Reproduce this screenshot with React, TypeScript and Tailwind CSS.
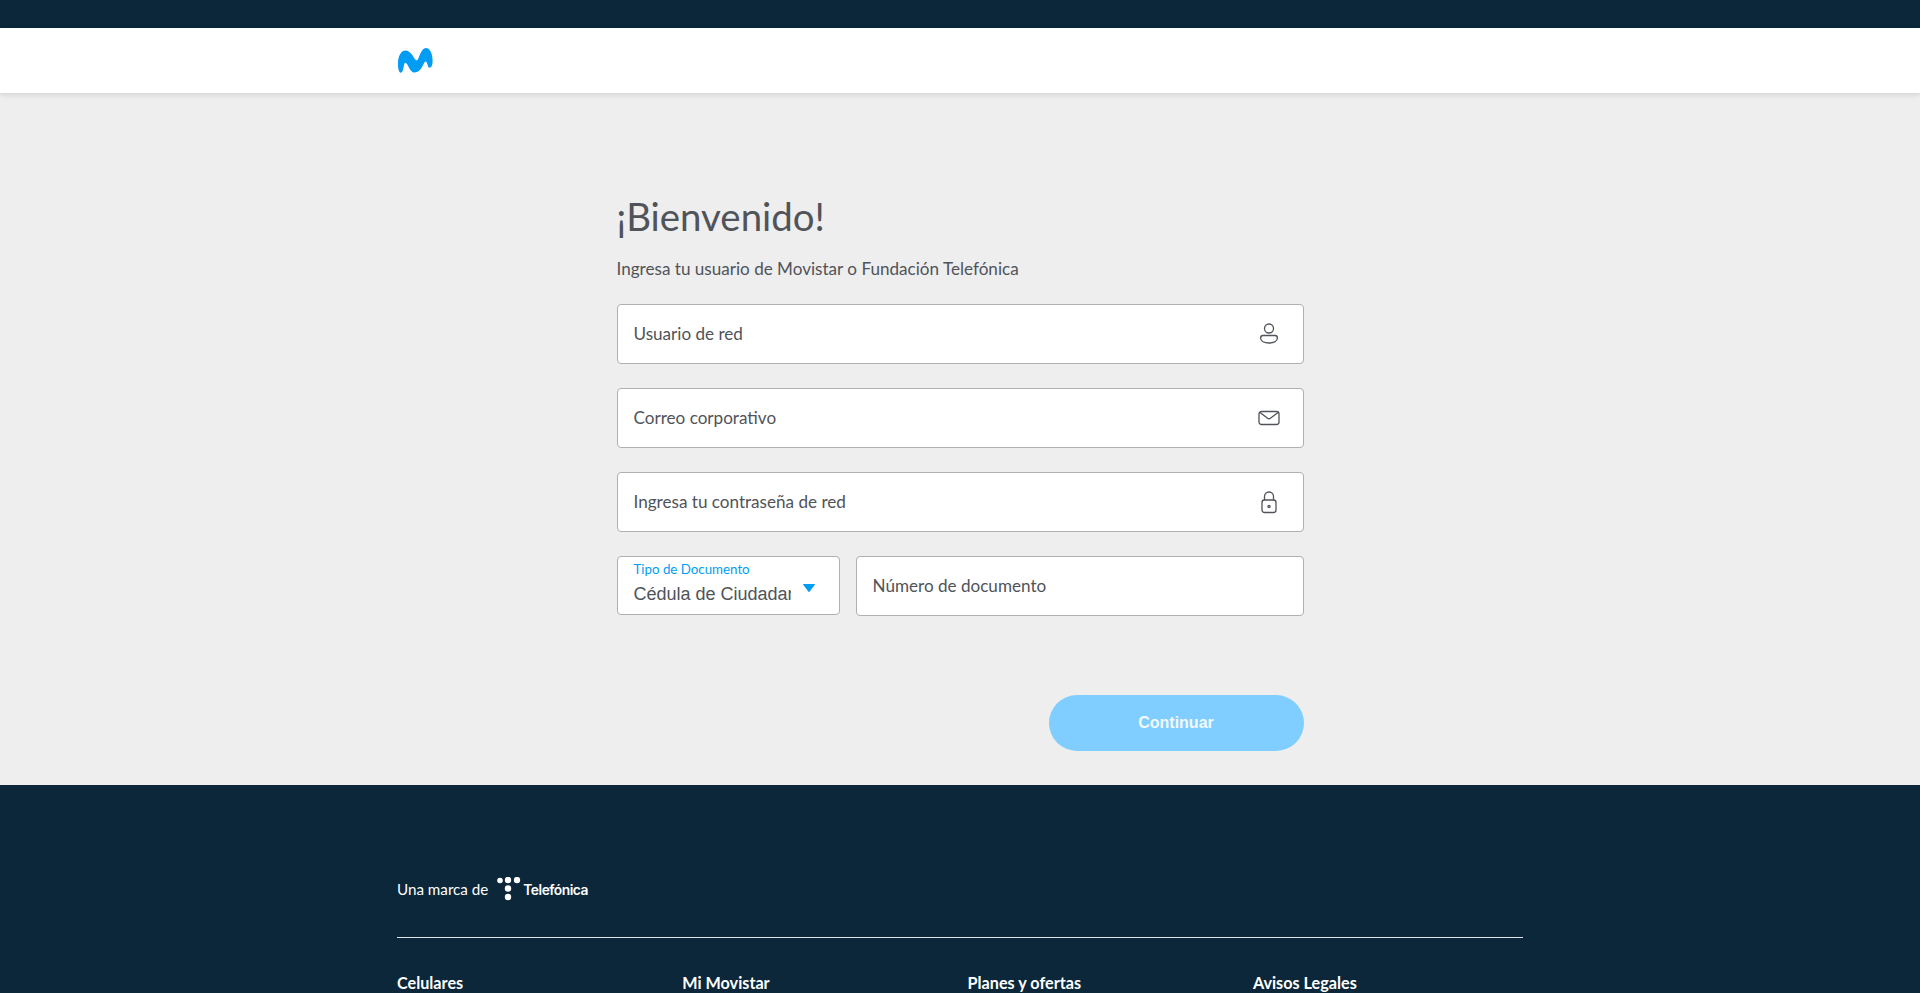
const font = "font-['Lato','Noto_Sans',sans-serif]";

function UserIcon() {
  return (
    <svg width="20" height="24" viewBox="0 0 20 24" fill="none" stroke="#50535a" strokeWidth="1.3">
      <circle cx="10" cy="6.500" r="4.500" />
      <path d="M4 13.500h12c1.600 0 2.400 1 2.400 2.600 0 3-3.600 4.900-8.400 4.900s-8.400-1.900-8.400-4.900c0-1.600.8-2.600 2.400-2.600z" />
    </svg>
  );
}

function MailIcon() {
  return (
    <svg width="22" height="16" viewBox="0 0 22 16" fill="none" stroke="#50535a" strokeWidth="1.3" strokeLinejoin="round">
      <rect x="1" y="1.500" width="20" height="13" rx="2.500" />
      <path d="M2 2.500l7.600 5.800c.9.600 1.900.600 2.800 0L20 2.500" />
    </svg>
  );
}

function LockIcon() {
  return (
    <svg width="18" height="24" viewBox="0 0 18 24" fill="none" stroke="#50535a" strokeWidth="1.3">
      <path d="M4.500 10V6.500a4.500 4.500 0 0 1 9 0V10" />
      <rect x="2" y="10" width="14" height="12.500" rx="2.500" />
      <circle cx="9" cy="16.500" r="1.100" />
    </svg>
  );
}

function MovistarLogo() {
  return (
    <svg width="36" height="26" viewBox="0 0 36 26" fill="#019df4">
      <path d="M3.700 25.700C1.800 25.700.6 20 1 15 1.500 8 4.500 3.500 8.500 3.500c4 0 6.500 4 8.700 7.500 1.300 2.200 2.300 2.700 3.300 2C22.500 10.500 24 1 29 1c4 0 6.600 6 6.600 13 0 4-1.100 6.700-3.100 6.700-2 0-2-6.200-4-6.200s-3.500 11-11 11c-5 0-6.500-9.800-9.200-9.800-2 0-1.300 10-4.600 10z" />
    </svg>
  );
}

function TelefonicaDots() {
  return (
    <svg width="24" height="24" viewBox="0 0 24 24" fill="#fff">
      <circle cx="3" cy="3.500" r="2.800" />
      <circle cx="11" cy="3" r="3.200" />
      <circle cx="20" cy="3" r="3.200" />
      <circle cx="11" cy="11.500" r="3.200" />
      <circle cx="11" cy="20" r="3.200" />
    </svg>
  );
}

function Field({ placeholder, icon }: { placeholder: string; icon?: React.ReactNode }) {
  return (
    <div className="flex h-[60px] items-center rounded-[4px] border border-[#b0b0b0] bg-white pl-4 pr-4">
      <input
        placeholder={placeholder}
        className="min-w-0 flex-1 bg-transparent text-[17.100px] text-[#50535a] outline-none placeholder:text-[#50535a]"
      />
      {icon && <span className="mr-[6px] flex w-[24px] justify-center">{icon}</span>}
    </div>
  );
}

const footerColumns = ["Celulares", "Mi Movistar", "Planes y ofertas", "Avisos Legales"];

export default function App() {
  return (
    <div className={`h-[993px] overflow-hidden bg-[#eeeeee] ${font}`}>
      <div className="h-[28px] bg-[#0b2739]" />
      <header className="relative flex h-[65px] items-center bg-white pb-[2px] pl-[397px] shadow-[0_1px_6px_rgba(0,0,0,0.15)]">
        <MovistarLogo />
      </header>

      <main className="mx-auto w-[687px] pt-[99px] pb-[34px]">
        <h1 className="text-[38.400px] leading-[48px] text-[#50535a]">¡Bienvenido!</h1>
        <p className="mt-[17px] text-[17.100px] leading-[24px] text-[#50535a]">
          Ingresa tu usuario de Movistar o Fundación Telefónica
        </p>

        <form className="mt-[23px] flex flex-col gap-[24px]">
          <Field placeholder="Usuario de red" icon={<UserIcon />} />
          <Field placeholder="Correo corporativo" icon={<MailIcon />} />
          <Field placeholder="Ingresa tu contraseña de red" icon={<LockIcon />} />

          <div className="flex gap-4">
            <div className="flex h-[59px] w-[223px] items-center rounded-[4px] border border-[#b0b0b0] bg-white pl-4 pr-[24px]">
              <div className="mb-[4px] min-w-0 flex-1">
                <div className="text-[13.300px] leading-[16px] text-[#019df4]">Tipo de Documento</div>
                <div className="mt-[5px] overflow-hidden whitespace-nowrap font-['Liberation_Sans',sans-serif] text-[18px] leading-[24px] text-[#50535a]">
                  Cédula de Ciudadanía
                </div>
              </div>
              <svg className="ml-[12px] mt-[4px]" width="12" height="8" viewBox="0 0 12 8" fill="#019df4">
                <path d="M.5 0h11c.4 0 .6.500.3.800L6.500 7.700c-.3.300-.7.300-1 0L.2.800C-.1.500.1 0 .5 0z" />
              </svg>
            </div>
            <div className="flex-1">
              <Field placeholder="Número de documento" />
            </div>
          </div>

          <div className="mt-[55px] flex justify-end">
            <button
              type="button"
              className="h-[56px] w-[255px] rounded-full bg-[#80ceff] font-['Liberation_Sans',sans-serif] text-[16px] font-bold text-[#f2faff]"
            >
              Continuar
            </button>
          </div>
        </form>
      </main>

      <footer className="h-[300px] bg-[#0b2739] text-white">
        <div className="mx-auto w-[1126px] pt-[92px]">
          <div className="flex h-[24px] items-center">
            <span className="text-[15.200px]">Una marca de</span>
            <span className="mb-[1px] ml-[9px] flex"><TelefonicaDots /></span>
            <span className="ml-[2px] mt-[2px] font-['Inter',sans-serif] text-[13.800px] font-semibold tracking-[-0.5px]">Telefónica</span>
          </div>
          <div className="mt-[36px] border-t border-[#e0e4e8]" />
          <div className="mt-[34px] grid grid-cols-[repeat(4,285.300px)]">
            {footerColumns.map((title) => (
              <h3 key={title} className="text-[16.200px] font-bold leading-[22px]">
                {title}
              </h3>
            ))}
          </div>
        </div>
      </footer>
    </div>
  );
}
